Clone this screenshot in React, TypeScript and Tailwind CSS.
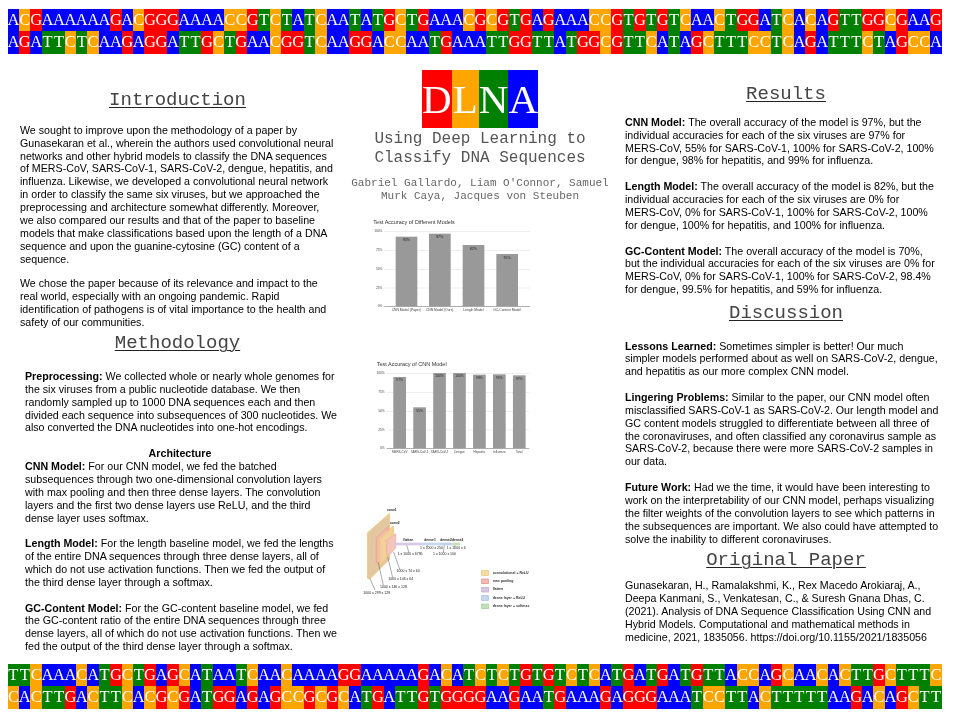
const ROWS = {
  a: "ACGAAAAAAGACGGGAAAACCGTCTATCAATATGCTGAAACGCGTGAGAAACCGTGTGTCAACTGGATCACAGTTGGCGAAG",
  b: "AGATTCTCAAGAGGATTGCTGAACGGTCAAGGACCAATGAAATTGGTTATGGCGTTCATAGCTTTCCTCAGATTTCTAGCCA",
  c: "TTCAAACATGCTGAGCATAATCAACAAAAGGAAAAAGACATCGCTCTGTGTCTCATGATGATGTTACCAGCAACACTTGCTTTC",
  d: "CACTTGACTTCACGCGATGGAGAGCCGCGCATGATTGTGGGGAAGAATGAAAGAGGGAAATCCTTACTTTTTAAGACAGCTT",
};

const BASE: Record<string, string> = {
  A: "bg-[#0000ff]",
  C: "bg-[#ffa500]",
  G: "bg-[#ff0000]",
  T: "bg-[#008000]",
};

function Strand({ seq }: { seq: string }) {
  return (
    <div className="flex h-[22.4px]">
      {seq.slice(0, 82).split("").map((ch, i) => (
        <span key={i} className={`flex w-[11.4px] shrink-0 justify-center leading-[22.4px] text-white ${BASE[ch]}`}>
          {ch}
        </span>
      ))}
    </div>
  );
}

function Band({ top, bottom, className }: { top: string; bottom: string; className: string }) {
  return (
    <div className={`ml-[7.7px] w-[934.8px] font-['Liberation_Serif',serif] text-[16.5px] ${className}`}>
      <Strand seq={top} />
      <Strand seq={bottom} />
    </div>
  );
}

function Heading({ children, className = "" }: { children: React.ReactNode; className?: string }) {
  return (
    <h2 className={`text-center font-['Liberation_Mono',monospace] text-[19px] leading-[22px] text-[#444] underline decoration-[#222] decoration-1 underline-offset-2 ${className}`}>
      {children}
    </h2>
  );
}

function P({ children, className = "" }: { children: React.ReactNode; className?: string }) {
  return <p className={`whitespace-nowrap text-[10.67px] leading-[12.87px] text-black ${className}`}>{children}</p>;
}

function Accuracy() {
  const bars = [
    [152, 80, "93%"],
    [252, 71, "97%"],
    [353, 105, "82%"],
    [454, 132, "70%"],
  ] as const;
  const names = ["CNN Model (Paper)", "CNN Model (Ours)", "Length Model", "GC-Content Model"];
  return (
    <svg viewBox="0 0 570 360" className="h-[120px] w-[190px] blur-[0.7px]" fontFamily="Liberation Sans, sans-serif">
      <text x="85" y="43" fontSize="16.5" fill="#333">Test Accuracy of Different Models</text>
      {[63, 120, 177, 233].map((y) => <rect key={y} x="118" y={y} width="437" height="2" fill="#e6e6e6" />)}
      <rect x="118" y="288" width="437" height="2" fill="#888" />
      {["100%", "75%", "50%", "25%", "0%"].map((t, i) => (
        <text key={t} x="112" y={[67, 124, 181, 237, 292][i]} fontSize="9.5" textAnchor="end" fill="#444">{t}</text>
      ))}
      {bars.map(([x, y, t], i) => (
        <g key={t}>
          <rect x={x} y={y} width="65" height={289 - y} fill="#999" />
          <text x={x + 32} y={y + 14} fontSize="11" textAnchor="middle" fill="#222">{t}</text>
          <text x={x + 32} y="304" fontSize="10" textAnchor="middle" fill="#444">{names[i]}</text>
        </g>
      ))}
    </svg>
  );
}

function CnnChart() {
  const bars = [
    [78, "97%", "MERS-CoV"],
    [169, "55%", "SARS-CoV-1"],
    [66, "100%", "SARS-CoV-2"],
    [66, "100%", "Dengue"],
    [71, "98%", "Hepatitis"],
    [70, "99%", "Influenza"],
    [73, "97%", "Total"],
  ] as const;
  return (
    <svg viewBox="0 0 570 360" className="h-[120px] w-[190px] blur-[0.7px]" fontFamily="Liberation Sans, sans-serif">
      <text x="95" y="46" fontSize="16.5" fill="#333">Test Accuracy of CNN Model</text>
      {[66, 123, 180, 236].map((y) => <rect key={y} x="125" y={y} width="428" height="2" fill="#e6e6e6" />)}
      <rect x="125" y="291" width="428" height="2" fill="#888" />
      {["100%", "75%", "50%", "25%", "0%"].map((t, i) => (
        <text key={t} x="119" y={[70, 127, 184, 240, 295][i]} fontSize="9.5" textAnchor="end" fill="#444">{t}</text>
      ))}
      {bars.map(([y, t, n], i) => {
        const x = 145 + i * 59.8;
        return (
          <g key={n}>
            <rect x={x} y={y} width="38" height={292 - y} fill="#999" />
            <text x={x + 19} y={y + 13} fontSize="10" textAnchor="middle" fill="#222">{t}</text>
            <text x={x + 19} y="306" fontSize="9" textAnchor="middle" fill="#444">{n}</text>
          </g>
        );
      })}
    </svg>
  );
}

function Architecture() {
  const labels: [number, number, string][] = [
    [126, 45, "conv1"], [135, 83, "conv2"], [175, 136, "flatten"], [238, 136, "dense1"], [286, 136, "dense2"], [321, 136, "dense3"],
  ];
  const dims: [number, number, string][] = [
    [158, 178, "1 x 1000 x 6796"], [225, 159, "1 x 1000 x 250"], [264, 178, "1 x 1000 x 100"], [305, 159, "1 x 1000 x 6"],
    [155, 229, "1000 x 74 x 64"], [130, 252, "1000 x 146 x 64"], [105, 276, "1000 x 146 x 128"], [55, 295, "1000 x 299 x 128"],
  ];
  const legend: [string, string, string][] = [
    ["#f7dba6", "#e8bf73", "convolutional + ReLU"],
    ["#f5b7b1", "#dc8f88", "max pooling"],
    ["#d9c8e3", "#b8a2c6", "flatten"],
    ["#c6d8f0", "#9db8dc", "dense layer + ReLU"],
    ["#c5e1b8", "#a0c890", "dense layer + softmax"],
  ];
  const lines = ["75,248 90,282", "100,200 115,268", "128,182 143,245", "146,168 165,222", "185,148 192,170", "247,148 249,153", "298,148 295,170", "330,148 328,153"];
  return (
    <svg viewBox="0 0 570 360" className="h-[120px] w-[190px] blur-[0.7px]" fontFamily="Liberation Sans, sans-serif">
      <polygon points="68,110 133,53 133,190 75,248 68,248" fill="#e3c7a0" stroke="#f0c77e" strokeWidth="3" />
      <polygon points="94,125 130,92 130,165 100,200 94,200" fill="#f3b9ae" stroke="#e89c92" strokeWidth="2" />
      <polygon points="104,128 145,90 145,155 110,205 104,205" fill="#f2d09a" stroke="#f0c77e" strokeWidth="3" />
      <polygon points="125,133 152,113 152,155 135,175 125,175" fill="#f6c4b8" stroke="#eda79b" strokeWidth="2" />
      <rect x="145" y="140" width="80" height="8" fill="#d9c8e3" />
      <rect x="225" y="140" width="58" height="8" fill="#c6d8f0" />
      <rect x="283" y="140" width="37" height="8" fill="#bcd2ef" />
      <rect x="320" y="140" width="25" height="8" fill="#c5e1b8" />
      {lines.map((p) => <polyline key={p} points={p} fill="none" stroke="#555" strokeWidth="1.5" />)}
      {labels.map(([x, y, t]) => <text key={t} x={x} y={y} fontSize="10" fontWeight="700" fill="#222">{t}</text>)}
      {dims.map(([x, y, t]) => <text key={t} x={x} y={y} fontSize="10.5" fill="#222">{t}</text>)}
      {legend.map(([fill, stroke, t], i) => (
        <g key={t}>
          <rect x="410" y={224 + i * 25} width="20" height="14" fill={fill} stroke={stroke} strokeWidth="2" />
          <text x="443" y={233 + i * 25} fontSize="10.5" fontWeight="700" fill="#333">{t}</text>
        </g>
      ))}
    </svg>
  );
}

export default function App() {
  return (
    <div className="flex h-[720px] w-[960px] flex-col overflow-hidden bg-white font-['Liberation_Sans',Arial,sans-serif]">
      <Band top={ROWS.a} bottom={ROWS.b} className="mt-[9px] shrink-0 blur-[0.35px]" />

      <main className="flex h-[610px] shrink-0 blur-[0.35px]">
        <section className="ml-[20px] w-[315px] shrink-0">
          <Heading className="mt-[35px]">Introduction</Heading>
          <P className="mt-[13px]">
            We sought to improve upon the methodology of a paper by<br />
            Gunasekaran et al., wherein the authors used convolutional neural<br />
            networks and other hybrid models to classify the DNA sequences<br />
            of MERS-CoV, SARS-CoV-1, SARS-CoV-2, dengue, hepatitis, and<br />
            influenza. Likewise, we developed a convolutional neural network<br />
            in order to classify the same six viruses, but we approached the<br />
            preprocessing and architecture somewhat differently. Moreover,<br />
            we also compared our results and that of the paper to baseline<br />
            models that make classifications based upon the length of a DNA<br />
            sequence and upon the guanine-cytosine (GC) content of a<br />
            sequence.
          </P>
          <P className="mt-[12px]">
            We chose the paper because of its relevance and impact to the<br />
            real world, especially with an ongoing pandemic. Rapid<br />
            identification of pathogens is of vital importance to the health and<br />
            safety of our communities.
          </P>
          <Heading className="mt-[3px]">Methodology</Heading>
          <div className="mt-[16px] pl-[5px]">
            <P>
              <b>Preprocessing:</b> We collected whole or nearly whole genomes for<br />
              the six viruses from a public nucleotide database. We then<br />
              randomly sampled up to 1000 DNA sequences each and then<br />
              divided each sequence into subsequences of 300 nucleotides. We<br />
              also converted the DNA nucleotides into one-hot encodings.
            </P>
            <P className="mt-[12.87px] text-center font-bold">Architecture</P>
            <P>
              <b>CNN Model:</b> For our CNN model, we fed the batched<br />
              subsequences through two one-dimensional convolution layers<br />
              with max pooling and then three dense layers. The convolution<br />
              layers and the first two dense layers use ReLU, and the third<br />
              dense layer uses softmax.
            </P>
            <P className="mt-[12.87px]">
              <b>Length Model:</b> For the length baseline model, we fed the lengths<br />
              of the entire DNA sequences through three dense layers, all of<br />
              which do not use activation functions. Then we fed the output of<br />
              the third dense layer through a softmax.
            </P>
            <P className="mt-[12.87px]">
              <b>GC-Content Model:</b> For the GC-content baseline model, we fed<br />
              the GC-content ratio of the entire DNA sequences through three<br />
              dense layers, all of which do not use activation functions. Then we<br />
              fed the output of the third dense layer through a softmax.
            </P>
          </div>
        </section>

        <section className="ml-[10px] flex w-[270px] shrink-0 flex-col">
          <div className="mx-auto mt-[16px] flex h-[58px] w-[116px] font-['Liberation_Serif',serif] text-[41px] leading-[58px] text-white">
            <span className="flex flex-1 justify-center bg-[#ff0000]">D</span>
            <span className="flex flex-1 justify-center bg-[#ffa500]">L</span>
            <span className="flex flex-1 justify-center bg-[#008000]">N</span>
            <span className="flex flex-1 justify-center bg-[#0000ff]">A</span>
          </div>
          <h1 className="mt-[2px] text-center font-['Liberation_Mono',monospace] text-[16px] leading-[19.5px] text-[#555]">
            Using Deep Learning to<br />Classify DNA Sequences
          </h1>
          <p className="mt-[8px] whitespace-nowrap text-center font-['Liberation_Mono',monospace] text-[11px] leading-[13px] text-[#666]">
            Gabriel Gallardo, Liam O'Connor, Samuel<br />Murk Caya, Jacques von Steuben
          </p>
          <div className="mt-[7px]"><Accuracy /></div>
          <div className="mt-[21px]"><CnnChart /></div>
          <div className="mt-[25px]"><Architecture /></div>
        </section>

        <section className="ml-[10px] w-[325px] shrink-0">
          <Heading className="mt-[29px] pr-[3px]">Results</Heading>
          <P className="mt-[11px]">
            <b>CNN Model:</b> The overall accuracy of the model is 97%, but the<br />
            individual accuracies for each of the six viruses are 97% for<br />
            MERS-CoV, 55% for SARS-CoV-1, 100% for SARS-CoV-2, 100%<br />
            for dengue, 98% for hepatitis, and 99% for influenza.
          </P>
          <P className="mt-[12.87px]">
            <b>Length Model:</b> The overall accuracy of the model is 82%, but the<br />
            individual accuracies for each of the six viruses are 0% for<br />
            MERS-CoV, 0% for SARS-CoV-1, 100% for SARS-CoV-2, 100%<br />
            for dengue, 100% for hepatitis, and 100% for influenza.
          </P>
          <P className="mt-[12.87px]">
            <b>GC-Content Model:</b> The overall accuracy of the model is 70%,<br />
            but the individual accuracies for each of the six viruses are 0% for<br />
            MERS-CoV, 0% for SARS-CoV-1, 100% for SARS-CoV-2, 98.4%<br />
            for dengue, 99.5% for hepatitis, and 59% for influenza.
          </P>
          <Heading className="mt-[6px] pr-[3px]">Discussion</Heading>
          <P className="mt-[15.5px]">
            <b>Lessons Learned:</b> Sometimes simpler is better! Our much<br />
            simpler models performed about as well on SARS-CoV-2, dengue,<br />
            and hepatitis as our more complex CNN model.
          </P>
          <P className="mt-[12.87px]">
            <b>Lingering Problems:</b> Similar to the paper, our CNN model often<br />
            misclassified SARS-CoV-1 as SARS-CoV-2. Our length model and<br />
            GC content models struggled to differentiate between all three of<br />
            the coronaviruses, and often classified any coronavirus sample as<br />
            SARS-CoV-2, because there were more SARS-CoV-2 samples in<br />
            our data.
          </P>
          <P className="mt-[12.87px]">
            <b>Future Work:</b> Had we the time, it would have been interesting to<br />
            work on the interpretability of our CNN model, perhaps visualizing<br />
            the filter weights of the convolution layers to see which patterns in<br />
            the subsequences are important. We also could have attempted to<br />
            solve the inability to different coronaviruses.
          </P>
          <Heading className="mt-[4px] pr-[3px]">Original Paper</Heading>
          <P className="mt-[8px]">
            Gunasekaran, H., Ramalakshmi, K., Rex Macedo Arokiaraj, A.,<br />
            Deepa Kanmani, S., Venkatesan, C., &amp; Suresh Gnana Dhas, C.<br />
            (2021). Analysis of DNA Sequence Classification Using CNN and<br />
            Hybrid Models. Computational and mathematical methods in<br />
            medicine, 2021, 1835056. https://doi.org/10.1155/2021/1835056
          </P>
        </section>
      </main>

      <Band top={ROWS.c.slice(0, 41) + ROWS.c.slice(43)} bottom={ROWS.d} className="shrink-0 blur-[0.35px]" />
    </div>
  );
}
